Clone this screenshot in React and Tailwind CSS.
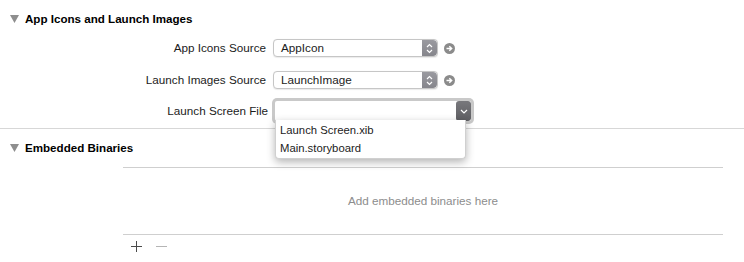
import React from "react";

function Triangle() {
  return (
    <svg width="9" height="8" viewBox="0 0 9 8" className="block">
      <polygon points="0,0 9,0 4.5,8" fill="#8e8e8e" />
    </svg>
  );
}

function Stepper() {
  return (
    <div className="w-[15px] h-full rounded-r-[4px] bg-gradient-to-b from-[#9a9aa0] to-[#86868c] flex items-center justify-center">
      <svg width="7" height="11" viewBox="0 0 7 11">
        <polyline points="1,4 3.5,1.5 6,4" fill="none" stroke="#fff" strokeWidth="1.2" />
        <polyline points="1,7 3.5,9.5 6,7" fill="none" stroke="#fff" strokeWidth="1.2" />
      </svg>
    </div>
  );
}

function GoArrow() {
  return (
    <svg width="11" height="11" viewBox="0 0 11 11" className="block">
      <circle cx="5.5" cy="5.5" r="5.5" fill="#8b8b8b" />
      <path d="M2.5 5.5 H7.5 M5.3 3.2 L7.7 5.5 L5.3 7.8" fill="none" stroke="#fff" strokeWidth="1.4" />
    </svg>
  );
}

function PopUp({ value }) {
  return (
    <div className="flex items-center gap-[6px]">
      <div className="w-[165px] h-[18px] flex rounded-[4px] border border-[#c6c6c6] bg-white shadow-[0_0.5px_1px_rgba(0,0,0,0.08)] overflow-hidden">
        <div className="flex-1 flex items-center pl-[7px] text-[11.7px] text-[#1c1c1c]">{value}</div>
        <Stepper />
      </div>
      <GoArrow />
    </div>
  );
}

export default function App() {
  return (
    <div className="relative w-[744px] h-[262px] bg-white overflow-hidden font-['Liberation_Sans',Arial,sans-serif] text-[#1c1c1c]">
      {/* Section 1 header */}
      <div className="mt-[10px] h-[17px] flex items-center pl-[10px] gap-[6px]">
        <Triangle />
        <span className="text-[11.6px] font-bold text-black">App Icons and Launch Images</span>
      </div>

      {/* Row 1 */}
      <div className="mt-[12px] h-[18px] flex items-center">
        <div className="w-[266px] text-right text-[11.7px]">App Icons Source</div>
        <div className="ml-[7px]">
          <PopUp value="AppIcon" />
        </div>
      </div>

      {/* Row 2 */}
      <div className="mt-[14px] h-[18px] flex items-center">
        <div className="w-[266px] text-right text-[11.7px]">Launch Images Source</div>
        <div className="ml-[7px]">
          <PopUp value="LaunchImage" />
        </div>
      </div>

      {/* Row 3 */}
      <div className="mt-[9px] h-[26px] flex items-center">
        <div className="w-[268px] text-right text-[11.7px]">Launch Screen File</div>
        <div className="ml-[4px] rounded-[5px] p-[3px] bg-[#c9c9c9]">
          <div className="w-[196px] h-[20px] flex bg-white rounded-[2px] overflow-hidden">
            <div className="flex-1" />
            <div className="w-[15px] h-full rounded-[3px] bg-gradient-to-b from-[#78787c] to-[#5e5e62] flex items-center justify-center">
              <svg width="8" height="5" viewBox="0 0 8 5">
                <polyline points="1,1 4,4 7,1" fill="none" stroke="#fff" strokeWidth="1.2" />
              </svg>
            </div>
          </div>
        </div>
      </div>

      {/* Separator */}
      <div className="mt-[4px] h-px bg-[#d7d7d7]" />

      {/* Section 2 header */}
      <div className="mt-[10px] h-[17px] flex items-center pl-[10px] gap-[6px]">
        <Triangle />
        <span className="text-[11.6px] font-bold text-black">Embedded Binaries</span>
      </div>

      {/* Binaries box */}
      <div className="mt-[11px] ml-[123px] w-[600px]">
        <div className="h-px bg-[#cfcfcf]" />
        <div className="h-[66px] flex items-center justify-center text-[11.7px] text-[#8d8d8d]">
          Add embedded binaries here
        </div>
        <div className="h-px bg-[#cfcfcf]" />
        <div className="h-[22px] flex items-center pl-[8px] gap-[14px]">
          <svg width="11" height="11" viewBox="0 0 11 11">
            <path d="M5.5 0 V11 M0 5.5 H11" stroke="#4a4a4a" strokeWidth="1" />
          </svg>
          <svg width="11" height="11" viewBox="0 0 11 11">
            <path d="M0 5.5 H11" stroke="#b5b5b5" strokeWidth="1" />
          </svg>
        </div>
      </div>

      {/* Dropdown menu overlay */}
      <div className="absolute left-[275px] top-[120px] w-[191px] bg-white shadow-[0_3px_8px_rgba(0,0,0,0.3)] border border-[#d0d0d0] border-t-0 rounded-b-[4px] py-[1px]">
        <div className="h-[18px] flex items-center pl-[4px] text-[11.3px] text-[#1c1c1c]">Launch Screen.xib</div>
        <div className="h-[18px] flex items-center pl-[4px] text-[11.3px] text-[#1c1c1c]">Main.storyboard</div>
      </div>
    </div>
  );
}
